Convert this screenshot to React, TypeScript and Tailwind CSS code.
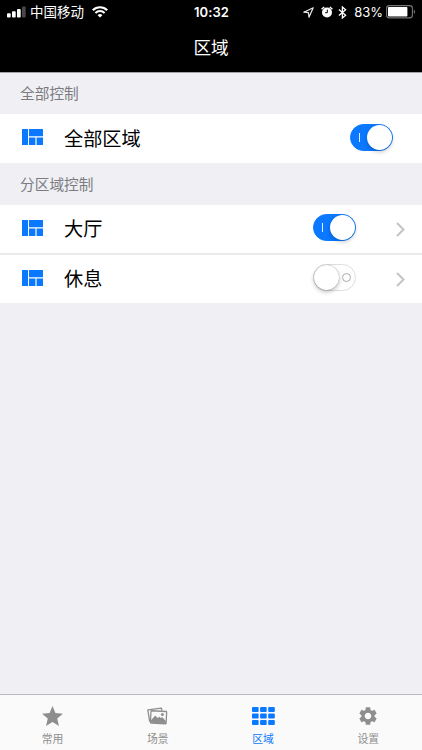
import React, { useState } from "react";
import clsx from "clsx";
import { MdSettings, MdStar } from "react-icons/md";

interface Area {
  id: string;
  name: string;
  on: boolean;
}

const initialAreas: Area[] = [
  { id: "hall", name: "大厅", on: true },
  { id: "lounge", name: "休息", on: false },
];

const AreaIcon = () => (
  <svg width="21" height="16" viewBox="0 0 21 16" fill="#0a78ff" className="shrink-0">
    <path d="M0 0h6v16H0zM7 0h14v7.3H7zM7 8.5h6.4V16H7zM14.6 8.5H21V16h-6.4z" />
  </svg>
);

const SignalIcon = () => (
  <svg width="19" height="12" viewBox="0 0 19 12" fill="#fff" className="shrink-0">
    <rect x="0" y="7.3" width="3.7" height="4.2" rx="0.9" />
    <rect x="5" y="5.2" width="3.7" height="6.3" rx="0.9" />
    <rect x="10" y="3" width="3.7" height="8.5" rx="0.9" />
    <rect x="15" y="0.5" width="3.7" height="11" rx="0.9" fill="#484848" />
  </svg>
);

const WifiIcon = () => (
  <svg width="16" height="12" viewBox="0 0 16 12" fill="none" stroke="#fff" strokeWidth="2.1">
    <path d="M0.8 4.2a10.2 10.2 0 0 1 14.4 0" />
    <path d="M3.4 6.9a6.5 6.5 0 0 1 9.2 0" />
    <path d="M8 11.6L5.6 9.2a3.4 3.4 0 0 1 4.8 0z" fill="#fff" stroke="none" />
  </svg>
);

const LocationIcon = () => (
  <svg width="11" height="11" viewBox="0 0 11 11" fill="none" stroke="#e8e8e8" strokeWidth="1.2" strokeLinejoin="round">
    <path d="M10.2 0.8L0.8 5.2l4.6 0.5L6 10.2z" />
  </svg>
);

const AlarmIcon = () => (
  <svg width="12" height="12" viewBox="0 0 12 12">
    <circle cx="6" cy="6.5" r="5" fill="#fff" />
    <path d="M0.6 3.2L3.2 0.9M11.4 3.2L8.8 0.9" stroke="#fff" strokeWidth="1.4" />
    <path d="M6.3 3.6v3.1H4.2" fill="none" stroke="#000" strokeWidth="1" />
  </svg>
);

const BluetoothIcon = () => (
  <svg width="9" height="13" viewBox="0 0 9 13" fill="none" stroke="#fff" strokeWidth="1.3">
    <path d="M0.9 3.5L7.6 9.2 4.4 12V1l3.2 2.8L0.9 9.5" />
  </svg>
);

const BatteryIcon = () => (
  <svg width="30" height="14" viewBox="0 0 30 14">
    <rect x="0.6" y="0.6" width="25.8" height="12.3" rx="2.6" fill="none" stroke="#777" strokeWidth="1.1" />
    <rect x="2" y="2" width="19.4" height="9.5" rx="0.8" fill="#fff" />
    <path d="M27.8 4.6c1.7 0.8 1.7 3.5 0 4.3z" fill="#777" />
  </svg>
);

const PhotosIcon = () => (
  <svg width="21" height="19" viewBox="0 0 21 19" fill="none" stroke="#8e8e8e" strokeWidth="1.3" strokeLinejoin="round">
    <path d="M3.4 14.2H2.6L0.8 2.8l13.6-1.6 0.5 2.4" />
    <rect x="3.7" y="4.1" width="15.7" height="12.3" rx="0.6" transform="rotate(3 11.5 10)" />
    <path d="M4 15.8v-2.6l4.2-4.6 2.4 2.5 1.6-1.4 1.5 1.2 1.4-.8 3.7 3.8v2.5z" fill="#8e8e8e" stroke="none" />
    <circle cx="15.4" cy="7.5" r="1.5" fill="#8e8e8e" stroke="none" />
  </svg>
);

const GridIcon = () => (
  <svg width="23" height="18" viewBox="0 0 23 18" fill="#0a78ff" className="ml-px">
    {[0, 6.5, 13].map((y) =>
      [0, 8.1, 16.2].map((x) => (
        <rect key={`${x}-${y}`} x={x} y={y} width="6.6" height="4.9" rx="1" />
      ))
    )}
  </svg>
);

interface ToggleProps {
  label: string;
  on: boolean;
  onChange: (on: boolean) => void;
}

const Toggle: React.FC<ToggleProps> = ({ label, on, onChange }) => (
  <button
    role="switch"
    aria-checked={on}
    aria-label={label}
    onClick={() => onChange(!on)}
    className={clsx(
      "mb-[3px] flex h-[27px] w-[43px] shrink-0 items-center rounded-full border",
      on ? "justify-end border-[#0a78ff] bg-[#0a78ff]" : "justify-start border-[#dedede] bg-white"
    )}
  >
    {on && <span className="mr-[7px] h-[9px] w-[1.5px] bg-[#e3f0ff]" />}
    <span
      className={clsx(
        "size-[25px] rounded-full bg-white",
        on
          ? "shadow-[0_2px_4px_rgba(0,0,0,0.22)]"
          : "shadow-[0_0_1px_rgba(0,0,0,0.45),0_2px_4px_rgba(0,0,0,0.25)]"
      )}
    />
    {!on && <span className="ml-[3px] size-[9px] rounded-full border border-[#aaa]" />}
  </button>
);

const SectionLabel: React.FC<{ children: React.ReactNode }> = ({ children }) => (
  <h2 className="flex h-[42px] items-center pl-5 pt-0.5 text-[14.7px] text-[#7b7b80]">{children}</h2>
);

const tabs = [
  { id: "common", label: "常用", icon: <MdStar className="size-[25px] text-[#8e8e8e]" /> },
  { id: "scene", label: "场景", icon: <PhotosIcon /> },
  { id: "area", label: "区域", icon: <GridIcon /> },
  { id: "settings", label: "设置", icon: <MdSettings className="size-[22px] text-[#8e8e8e]" /> },
];

const App: React.FC = () => {
  const [allOn, setAllOn] = useState(true);
  const [areas, setAreas] = useState(initialAreas);

  const handleAreaChange = (id: string, on: boolean) => {
    setAreas(areas.map((area) => (area.id === id ? { ...area, on } : area)));
  };

  return (
    <div className="flex h-[750px] w-[422px] flex-col overflow-hidden bg-[#efeff4] font-['Inter','Noto_Sans_CJK_SC',sans-serif]">
      {/* Status bar and title */}
      <header className="h-[73px] shrink-0 border-b border-[#a5a3aa] bg-black text-white">
        <div className="grid h-6 grid-cols-[1fr_auto_1fr] items-center pl-[7px] pr-1.5">
          <div className="flex items-center">
            <SignalIcon />
            <span className="ml-1 mr-2 text-[13.5px] leading-6">中国移动</span>
            <WifiIcon />
          </div>
          <span className="text-[13px] font-semibold leading-6 tracking-[0.1px]">10:32</span>
          <div className="flex items-center justify-end">
            <LocationIcon />
            <span className="ml-[7px]">
              <AlarmIcon />
            </span>
            <span className="ml-[5px]">
              <BluetoothIcon />
            </span>
            <span className="ml-[7px] mr-[3px] text-[13px] leading-6">83%</span>
            <BatteryIcon />
          </div>
        </div>
        <h1 className="flex h-12 items-center justify-center pt-px text-[17.6px]">区域</h1>
      </header>

      <main className="-mt-px flex-1">
        <SectionLabel>全部控制</SectionLabel>
        <div className="flex h-[49px] items-center bg-white pl-[22px] pr-[29px]">
          <span className="mb-[3px]">
            <AreaIcon />
          </span>
          <span className="ml-[21px] flex-1 pt-0.5 text-[19.2px] text-black">全部区域</span>
          <Toggle label="全部区域" on={allOn} onChange={setAllOn} />
        </div>

        <SectionLabel>分区域控制</SectionLabel>
        <div className="flex flex-col gap-0.5 bg-[#ebebed]">
          {areas.map((area) => (
            <div key={area.id} className="flex h-12 items-center bg-white pl-[22px] pr-[17px]">
              <span className="mb-0.5">
                <AreaIcon />
              </span>
              <span className="ml-[21px] flex-1 text-[19.2px] text-black">{area.name}</span>
              <Toggle label={area.name} on={area.on} onChange={(on) => handleAreaChange(area.id, on)} />
              <svg width="9" height="15" viewBox="0 0 9 15" fill="none" stroke="#c4c4c8" strokeWidth="2" className="ml-10">
                <path d="M1 1l6.5 6.5L1 14" />
              </svg>
            </div>
          ))}
        </div>
      </main>

      {/* Bottom tabs */}
      <nav className="grid h-14 shrink-0 grid-cols-4 border-t border-[#b9b9bd] bg-[#fafafa] pr-px">
        {tabs.map((tab) => (
          <button key={tab.id} className="flex flex-col items-center pt-2">
            <span className="flex h-[26px] items-center">{tab.icon}</span>
            <span
              className={clsx(
                "mt-[3px] text-[10.8px] leading-4",
                tab.id === "area" ? "text-[#0a78ff]" : "text-[#8e8e8e]"
              )}
            >
              {tab.label}
            </span>
          </button>
        ))}
      </nav>
    </div>
  );
};

export default App;
